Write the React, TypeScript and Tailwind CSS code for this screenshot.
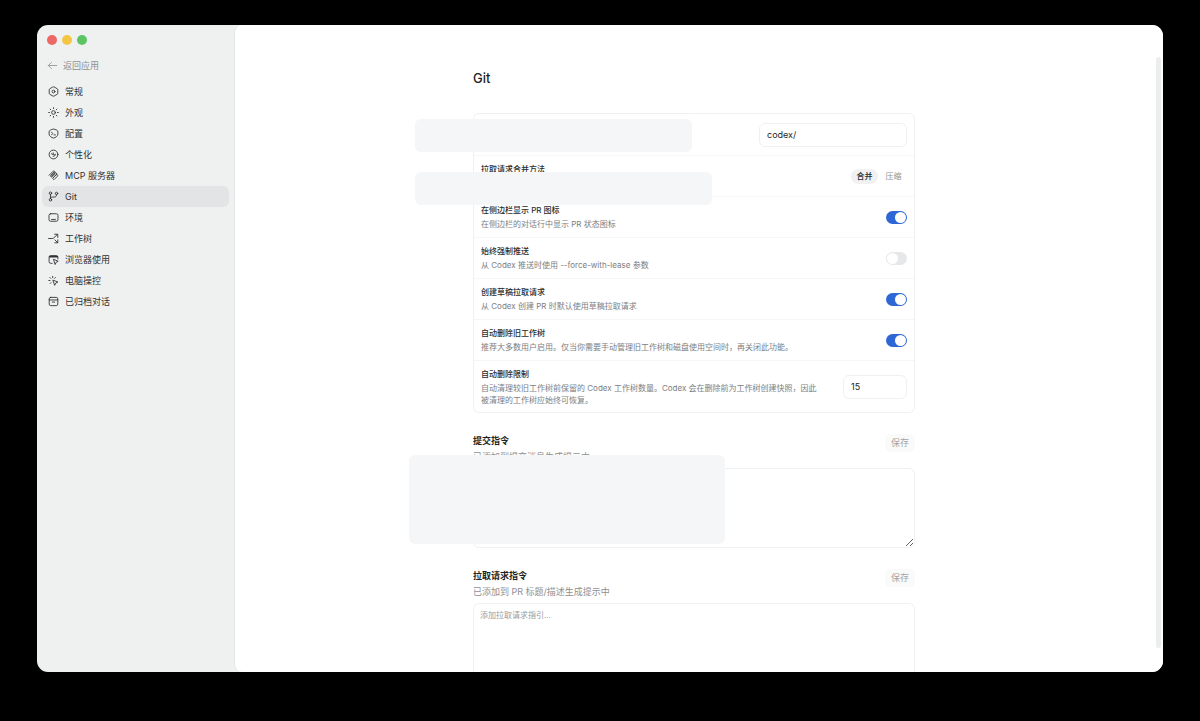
import { ReactNode, useState } from "react";
import clsx from "clsx";

type IconProps = { children: ReactNode };

function Icon({ children }: IconProps) {
  return (
    <svg
      viewBox="0 0 20 20"
      className="size-[11px] shrink-0"
      fill="none"
      stroke="currentColor"
      strokeWidth="1.6"
      strokeLinecap="round"
      strokeLinejoin="round"
      aria-hidden="true"
    >
      {children}
    </svg>
  );
}

const navItems = [
  {
    id: "general",
    label: "常规",
    icon: (
      <Icon>
        <path d="M9 1.7a2 2 0 0 1 2 0l5.8 3.3a2 2 0 0 1 1 1.7v6.6a2 2 0 0 1-1 1.7L11 18.3a2 2 0 0 1-2 0L3.2 15a2 2 0 0 1-1-1.7V6.7a2 2 0 0 1 1-1.7z" />
        <circle cx="10" cy="10" r="2.6" />
      </Icon>
    ),
  },
  {
    id: "appearance",
    label: "外观",
    icon: (
      <Icon>
        <circle cx="10" cy="10" r="3.4" />
        <path d="M10 1.2v1.6M10 17.2v1.6M1.2 10h1.6M17.2 10h1.6M3.8 3.8 5 5M15 15l1.2 1.2M3.8 16.2 5 15M15 5l1.2-1.2" />
      </Icon>
    ),
  },
  {
    id: "config",
    label: "配置",
    icon: (
      <Icon>
        <path d="M7.5 2.4q2.5-1 5 0l3.3 1.4q2.2 1 2.2 3.2v4q0 2.8-2.3 4.4l-3 2.1q-2.700 1.600-5.400 0l-3-2.100Q2 13.800 2 11V7q0-2.200 2.200-3.200z" />
        <path d="m6.500 7.500 2 2.500-2 2.500M11 12.500h2.500" />
      </Icon>
    ),
  },
  {
    id: "personalization",
    label: "个性化",
    icon: (
      <Icon>
        <circle cx="10" cy="10" r="8" />
        <path d="M6.500 8.500c0 1.800 1 2 1.800 1.500M9.500 6.800v3.400h2M13.500 9.500c0 2.500-1.600 3.800-4 3.800" />
      </Icon>
    ),
  },
  {
    id: "mcp",
    label: "MCP 服务器",
    icon: (
      <Icon>
        <path d="m2 9.500 7-7a2 2 0 0 1 3 3L6.700 10.800M7 10.600l5.200-5.100a2 2 0 0 1 3 3l-6.200 6.200a.8.8 0 0 0 0 1.200l1.800 1.800M10.500 4.200 5.300 9.300a2 2 0 0 0 3 3l5.200-5.200" />
        <path d="m15.200 8.500 1.500-.2a2 2 0 0 1 .5 3l-5.200 5.200" />
      </Icon>
    ),
  },
  {
    id: "git",
    label: "Git",
    icon: (
      <Icon>
        <circle cx="4.500" cy="4" r="2.200" />
        <circle cx="4.500" cy="16" r="2.200" />
        <circle cx="15.500" cy="4.500" r="2.200" />
        <path d="M4.500 6.200v7.600M15.500 6.700c0 3-1.300 4.300-4 4.300H8c-2.200 0-3.500.8-3.500 2.800" />
      </Icon>
    ),
  },
  {
    id: "environment",
    label: "环境",
    icon: (
      <Icon>
        <rect x="1.800" y="3.200" width="16.400" height="13.600" rx="3" />
        <path d="M6.500 13.500h7" />
      </Icon>
    ),
  },
  {
    id: "worktree",
    label: "工作树",
    icon: (
      <Icon>
        <path d="M1 10h6.500c1.500 0 2.500-.6 3.500-1.600L17 2.800M12 2.200h5.800V8M12.500 12.500l5 5M17.800 12.500v5.300h-5.300" />
      </Icon>
    ),
  },
  {
    id: "browser",
    label: "浏览器使用",
    icon: (
      <Icon>
        <path d="M7.500 17H5a3 3 0 0 1-3-3V6a3 3 0 0 1 3-3h10a3 3 0 0 1 3 3v3" />
        <path d="M3 4.800h14" strokeWidth="3" />
        <path d="m10.500 9.800 8 3.400-3.600 1.700-1.700 3.600z" />
      </Icon>
    ),
  },
  {
    id: "computer",
    label: "电脑操控",
    icon: (
      <Icon>
        <path d="m9.500 9.500 8.500 3.200-3.700 1.800-1.900 3.700z" />
        <path d="M8.500 2.500v2.300M3.500 4.500l1.500 1.600M1.500 10h2.300M4 15.500l1.500-1.600M13.500 4.500 12 6.100" />
      </Icon>
    ),
  },
  {
    id: "archived",
    label: "已归档对话",
    icon: (
      <Icon>
        <rect x="2.200" y="2.500" width="15.600" height="15" rx="2.800" />
        <path d="M2.200 7.200h15.600M7.800 11h4.400" />
      </Icon>
    ),
  },
];

function Sidebar() {
  const [active, setActive] = useState("git");

  return (
    <aside className="w-[197px] shrink-0 px-[5px] pt-[10px] text-[9px]">
      <div className="flex gap-[5px] px-[5px]">
        <span className="size-[10px] rounded-full bg-[#ec6765]" />
        <span className="size-[10px] rounded-full bg-[#f2c644]" />
        <span className="size-[10px] rounded-full bg-[#5dc466]" />
      </div>
      <button type="button" className="mt-[10px] flex h-[21px] items-center gap-[5px] px-[5px] text-[#8e9092]">
        <Icon>
          <path d="M17.500 10H2.500M8 4.500 2.500 10 8 15.500" strokeWidth="1.500" />
        </Icon>
        返回应用
      </button>
      <nav className="mt-[5px]">
        {navItems.map((item) => (
          <a
            key={item.id}
            href={`#${item.id}`}
            onClick={() => setActive(item.id)}
            className={clsx(
              "flex h-[21px] items-center gap-[6px] rounded-[6px] px-[6px] text-[#2f3133]",
              item.id === active && "bg-[#e3e4e5]"
            )}
          >
            {item.icon}
            {item.label}
          </a>
        ))}
      </nav>
    </aside>
  );
}

type RowProps = {
  title?: string;
  description?: string;
  htmlFor?: string;
  children: ReactNode;
};

function Row({ title, description, htmlFor, children }: RowProps) {
  return (
    <div className="flex min-h-[41px] items-center justify-between gap-6 border-t border-[#f6f6f7] px-[7px] py-[6px] first:border-t-0">
      <div className="min-w-0 flex-1 self-start text-[8px]">
        <label htmlFor={htmlFor} className="block min-h-[14px] font-medium leading-[14px] text-[#2a2c2e]">
          {title}
        </label>
        {description && <p className="mt-px leading-[12px] text-[#7c7e81]">{description}</p>}
      </div>
      {children}
    </div>
  );
}

function Toggle({ id, defaultChecked }: { id: string; defaultChecked?: boolean }) {
  return (
    <input
      id={id}
      type="checkbox"
      role="switch"
      defaultChecked={defaultChecked}
      className="flex h-[13px] w-[21px] shrink-0 appearance-none items-center rounded-full bg-[#e6e7e8] px-px before:size-[11px] before:rounded-full before:bg-white checked:justify-end checked:bg-[#2f66d5]"
    />
  );
}

function MergeMethod() {
  const [method, setMethod] = useState("合并");

  return (
    <div className="flex gap-[2px] text-[8px]">
      {["合并", "压缩"].map((option) => (
        <button
          key={option}
          type="button"
          aria-pressed={option === method}
          onClick={() => setMethod(option)}
          className={clsx(
            "h-[15px] w-[27px] rounded-full",
            option === method ? "bg-[#f1f1f2] font-medium text-[#2a2c2e]" : "text-[#8e9092]"
          )}
        >
          {option}
        </button>
      ))}
    </div>
  );
}

type InstructionsProps = {
  id: string;
  title: string;
  description: string;
  placeholder?: string;
  children?: ReactNode;
};

function Instructions({ id, title, description, placeholder, children }: InstructionsProps) {
  return (
    <section className="relative mt-[21px]">
      <div className="flex items-start justify-between text-[9px] leading-[14px]">
        <div>
          <label htmlFor={id} className="block font-semibold text-[#1d1f21]">
            {title}
          </label>
          <p className="mt-[2px] text-[#8e9092]">{description}</p>
        </div>
        <button type="button" className="h-[18px] rounded-[5px] bg-[#fafafa] px-[6px] text-[#a3a4a6]">
          保存
        </button>
      </div>
      <textarea
        id={id}
        placeholder={placeholder}
        className="mt-1 block h-20 w-full rounded-[6px] border border-[#f0f0f1] px-[6px] py-[5px] text-[8px] leading-[12px] placeholder:text-[#9a9b9d]"
      />
      {children}
    </section>
  );
}

const inputClass = "h-6 rounded-[6px] border border-[#f0f0f1] px-[7px] text-[9px] text-[#1d1f21]";

export default function App() {
  return (
    <div className="h-screen bg-black px-[37px] pt-[25px] pb-[49px] font-['Inter','Noto_Sans_CJK_SC',sans-serif]">
      <div className="flex h-full overflow-hidden rounded-[11px] bg-[#eff1f1]">
        <Sidebar />
        <main className="flex min-w-0 flex-1 overflow-hidden rounded-l-[8px] border-l border-[#e4e6e6] bg-white">
          <div className="min-w-0 flex-1 overflow-hidden">
            <div className="mx-auto max-w-[442px] pt-[43px]">
              <h1 className="text-[13px] font-medium leading-5 text-[#1d1f21]">Git</h1>

              <div className="relative mt-[25px] rounded-[6px] border border-[#f0f0f1]">
                <Row>
                  <input aria-label="分支前缀" defaultValue="codex/" className={clsx(inputClass, "w-[148px]")} />
                </Row>
                <Row title="拉取请求合并方法">
                  <MergeMethod />
                </Row>
                <Row htmlFor="pr-icons" title="在侧边栏显示 PR 图标" description="在侧边栏的对话行中显示 PR 状态图标">
                  <Toggle id="pr-icons" defaultChecked />
                </Row>
                <Row htmlFor="force-push" title="始终强制推送" description="从 Codex 推送时使用 --force-with-lease 参数">
                  <Toggle id="force-push" />
                </Row>
                <Row htmlFor="draft-pr" title="创建草稿拉取请求" description="从 Codex 创建 PR 时默认使用草稿拉取请求">
                  <Toggle id="draft-pr" defaultChecked />
                </Row>
                <Row
                  htmlFor="auto-delete"
                  title="自动删除旧工作树"
                  description="推荐大多数用户启用。仅当你需要手动管理旧工作树和磁盘使用空间时，再关闭此功能。"
                >
                  <Toggle id="auto-delete" defaultChecked />
                </Row>
                <Row
                  htmlFor="delete-limit"
                  title="自动删除限制"
                  description="自动清理较旧工作树前保留的 Codex 工作树数量。Codex 会在删除前为工作树创建快照，因此被清理的工作树应始终可恢复。"
                >
                  <input id="delete-limit" inputMode="numeric" defaultValue="15" className={clsx(inputClass, "w-16")} />
                </Row>
                {/* redaction blocks */}
                <div className="absolute top-[5px] -left-[59px] h-[33px] w-[277px] rounded-[6px] bg-[#f5f6f8]" />
                <div className="absolute top-[58px] -left-[59px] h-[33px] w-[297px] rounded-[6px] bg-[#f5f6f8]" />
              </div>

              <Instructions id="commit" title="提交指令" description="已添加到提交消息生成提示中">
                <div className="absolute top-[21px] -left-16 h-[89px] w-[316px] rounded-[6px] bg-[#f5f6f8]" />
              </Instructions>
              <Instructions
                id="pull-request"
                title="拉取请求指令"
                description="已添加到 PR 标题/描述生成提示中"
                placeholder="添加拉取请求指引…"
              />
            </div>
          </div>
          <div className="flex w-[10px] shrink-0 justify-end pt-8 pr-[2px] pb-6">
            <div className="w-[5px] rounded-full bg-[#eceeee]" />
          </div>
        </main>
      </div>
    </div>
  );
}
